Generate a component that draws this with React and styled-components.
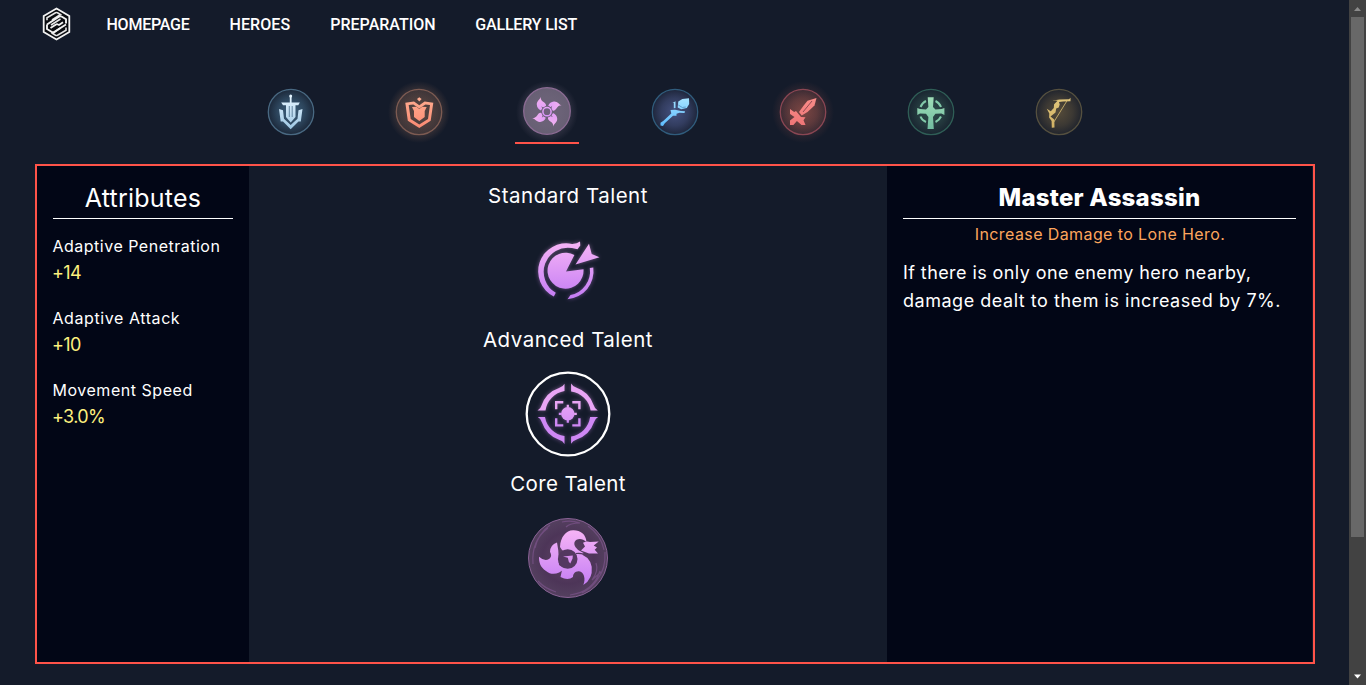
import React from "react";
import styled, { createGlobalStyle } from "styled-components";

const Global = createGlobalStyle`
  *, *::before, *::after { box-sizing: border-box; }
  body { margin: 0; background: #141b2a; overflow: hidden; }
  h2, h3, p, dl, dt, dd { margin: 0; font-weight: 400; }
`;

const Window = styled.div`
  display: flex;
  height: 685px;
  color: #fff;
  font-family: Inter, "Noto Sans", sans-serif;
`;
const Page = styled.div`
  flex: 1;
  display: flex;
  flex-direction: column;
`;
const Header = styled.header`
  display: flex;
  align-items: center;
  height: 48px;
  padding-left: 42px;
  gap: 35.5px;
`;
const Nav = styled.nav`
  display: flex;
  gap: 40px;
  padding-top: 2px;
`;
const NavLink = styled.a`
  width: ${(p) => p.$width}px;
  font: 500 16px/24px Roboto, sans-serif;
  letter-spacing: ${(p) => p.$track}px;
  white-space: nowrap;
`;
const RoleBar = styled.div`
  display: flex;
  justify-content: center;
  margin-top: 32px;
  height: 64px;
`;
const RoleSlot = styled.div`
  width: 128px;
  display: flex;
  justify-content: center;
`;
const RoleButton = styled.div`
  width: 64px;
  height: 64px;
  border-bottom: 2px solid ${(p) => (p.$active ? "#ff5349" : "transparent")};
  svg { display: block; overflow: visible; }
`;
const Board = styled.main`
  display: flex;
  height: 500px;
  margin: 20px 34px 0 35px;
  border: 2px solid #ff5349;
`;
const Column = styled.section`
  flex: 0 0 ${(p) => p.$width}px;
  padding: 16px;
  background: ${(p) => (p.$dark ? "#020616" : "transparent")};
`;
const Heading = styled.h2`
  height: 37px;
  border-bottom: 1px solid #fff;
  text-align: center;
  white-space: nowrap;
  font-size: ${(p) => p.$size || 24}px;
  font-weight: ${(p) => p.$weight || 400};
  line-height: 32px;
  letter-spacing: ${(p) => p.$track}px;
`;
const Stats = styled.dl`
  display: flex;
  flex-direction: column;
  gap: 20px;
  margin-top: 15px;
`;
const StatName = styled.dt`
  margin-left: -0.5px;
  font-size: 16px;
  line-height: 24px;
  letter-spacing: ${(p) => p.$track}px;
  white-space: nowrap;
`;
const StatValue = styled.dd`
  margin-left: -1px;
  padding-top: 1px;
  font-size: 18px;
  line-height: 27px;
  letter-spacing: -0.6px;
  color: #fdf07e;
`;
const Talent = styled.div`
  display: flex;
  flex-direction: column;
  align-items: center;
  height: 144px;
  svg { margin-top: 18px; overflow: visible; }
`;
const TalentTitle = styled.h3`
  font-size: 20.5px;
  line-height: 28px;
  letter-spacing: ${(p) => p.$track}px;
`;
const Summary = styled.p`
  margin-top: 3px;
  padding-left: 1px;
  text-align: center;
  font-size: 16px;
  line-height: 24px;
  letter-spacing: 0.4px;
  color: #fca55d;
`;
const Description = styled.p`
  margin-top: 13px;
  font-size: 18px;
  line-height: 28px;
  white-space: nowrap;
`;
const DescriptionLine = styled.span`
  display: block;
  letter-spacing: ${(p) => p.$track}px;
`;
const Scrollbar = styled.aside`
  width: 17px;
  display: flex;
  flex-direction: column;
  align-items: center;
  background: #424242;
`;
const Thumb = styled.div`
  width: 13px;
  height: 520px;
  background: #686868;
`;
const ScrollArrow = styled.svg`
  width: 17px;
  height: 17px;
  margin-top: ${(p) => (p.$end ? "auto" : 0)};
`;

const Logo = () => (
  <svg width="29" height="34" viewBox="0 0 29 34" fill="none">
    <path d="M14.5 1.5 27.3 9v16L14.5 32.500 1.700 25V9Z" fill="#0a0c10" stroke="#f2f2f2" strokeWidth="1.8" />
    <path d="M5 13.300V10.800L13.500 5.800q1-.5 2 0l3 1.700-8.500 5.500M24 20.500v2.700l-8.500 5q-1 .5-2 0l-3-1.700 8-5.500" stroke="#e4e4e4" strokeWidth="1.600" />
    <path d="M5 17.500 17 9.600q1.500-.8 3 .1l4 2.500v4.300M24 17.500l-11.500 7.300q-1.500.8-3 0L5 22v-4.500M8.500 21l5.500-3.500q1-.7 2 0l1 .5 4-2.700" stroke="#f2f2f2" strokeWidth="1.900" />
    <path d="m9 18 9.500-6" stroke="#e8e8e8" strokeWidth="1.500" />
  </svg>
);

const blades = [0, 90, 180, 270];

const roles = [
  {
    id: "tank", ring: "#496982", glow: "#4a7798", top: "#e4f4ff", bottom: "#9fc8e4", tint: 0.75,
    art: (
      <>
        <circle cx="31.7" cy="16" r="1.5" />
        <path d="M30.800 16h1.800v6.500h8.200l-1.500 2.700H36.500V37l-4.800 5.500L27 37V25.200H24l-1.800-2.700h8.600Z" />
        <path d="M20 29l4 1.200 1 8.500 6.700 6.300 6.800-6.300 1-8.500 4-1.200-1.700 12.500h-2.300L31.700 49.200 24 41.500h-2.300Z" />
        <path d="M30.300 26v11M33.200 26v11" stroke="#496e8b" strokeWidth=".8" />
      </>
    ),
  },
  {
    id: "fighter", ring: "#7d5b52", glow: "#8c6552", top: "#ffad91", bottom: "#fb8a72", tint: 0.42, halo: 0.28,
    art: (
      <>
        <path d="m32.300 17.300 2.300 1.700-2.300 2.500L30 19Z" />
        <path d="M18.300 22.700 27 21.500l5.300 3.700 5.300-3.700 8.700 1.200-2.600 18-11.400 7.200-11.500-7.200Zm3.400 2.300 2 14 8.600 5.600 8.700-5.600 2-14-4.600-.4-6.100 3.800-6-3.800Z" fillRule="evenodd" />
        <path d="M25 27l4.500-.3 2.800 2.200 2.900-2.200 4.500.3-2 4v6l-5.400 4-5.300-4v-6Z" />
      </>
    ),
  },
  {
    id: "assassin", ring: "#8b6b93", glow: "#6b6277", top: "#f3b2f0", bottom: "#c683ff", active: true, halo: 0.3,
    art: (
      <>
        {blades.map((a) => (
          <path key={a} transform={`rotate(${a} 32 31.7)`} d="M25.600 17C24.800 20 21.500 21 21.800 24.800 22 27.500 23.500 29.500 26 30.500L27.500 28 26 26.500 29 27.500 31 26C31.800 22 25.500 22.500 25.600 17Z" />
        ))}
        <circle cx="32" cy="31.700" r="5.600" fill="#70617d" />
        <circle cx="32" cy="31.700" r="4.100" fill="none" stroke="url(#ink-assassin)" strokeWidth="1.500" />
      </>
    ),
  },
  {
    id: "mage", ring: "#305c7c", glow: "#536198", top: "#a8e4ff", bottom: "#58baff", tint: 0.78,
    art: (
      <>
        <path d="m35.300 21.500 4-2.600 6.700-.7.200 5.800-2.400 4-5.600 1.200-3.500-1.700Z" />
        <path d="m29.500 23 3-1.700v6.600l-1.700.3v-5.200ZM27.500 30l4.500-.2 6 1.300 4 .1-.5 1.800-5-.2-3 1v2h-3.500l-8.200 7.500-1.800 2.800-2.500-.5v-2.800l3-2 7.800-7.200Z" />
        <path d="m35.300 25 4 2.500 3.500-.5" fill="none" stroke="#528fc0" strokeWidth=".8" />
      </>
    ),
  },
  {
    id: "warrior", ring: "#8a4653", glow: "#945049", top: "#f98d89", bottom: "#ed7375", tint: 0.78, halo: 0.18,
    art: (
      <>
        <path d="m45.500 18-2 7.500-7 6.500-5.800 3.600-2.700-3.600 4.500-6.300 4-5Z" />
        <path d="m32 32 9-11" stroke="#924952" strokeWidth="1" />
        <path d="m19 29 4.200 3 1.800-1 5 6 4.500.2-2 3L34.500 45h-4l-4.600-4-3.500 4H19v-4.500l4.500-3.500L19 34Z" />
      </>
    ),
  },
  {
    id: "support", ring: "#2f5e56", glow: "#487e6b", top: "#a0deb8", bottom: "#72bda0", tint: 0.5,
    art: (
      <>
        <path d="M28.700 17.300h6L34 27l2.500 2.500 6-.4 2.900-1v7l-3-1.500-6 .2L34 37l.8 12h-6.300l.9-12-2.400-3.200-6-.2-2.700 1.500v-7l2.700 1 6 .4 2.400-2.500Z" />
        <path d="M21.500 27q2-4.500 5.500-6M36.500 21q4 2 5.500 6M21.500 36.500q1.500 4 5.500 5.500M36.500 42q4-2 5.500-5.500" fill="none" stroke="#82c9a9" strokeWidth="2" />
      </>
    ),
  },
  {
    id: "marksman", ring: "#55503f", glow: "#7c6843", top: "#e2c77c", bottom: "#d0b063", tint: 0.62,
    art: (
      <>
        <path d="m24.500 20.700 8-1.200 9.500-.3 1.500-1.400v3.400l-7.500.2-4 .5.700 2.500-1 3-2.500 1-.7 4-5 4 3.800 3.200.2 7.900-2.700.2-.2-6.700-2.500-3.500.2-4-2.500-4.800 4 2.500 3-3.200.3-3.700 3.500-3.500-2.200-.4Z" />
        <path d="M40.300 20.300 26.500 42.500" stroke="#cbb16c" strokeWidth=".9" />
      </>
    ),
  },
];

const RoleIcon = ({ role }) => (
  <svg width="64" height="64" viewBox="0 0 64 64">
    <defs>
      <radialGradient id={`glow-${role.id}`}>
        <stop offset="0" stopColor={role.glow} stopOpacity={role.active ? 1 : role.tint} />
        <stop offset=".6" stopColor={role.glow} stopOpacity={role.active ? 1 : role.tint * 0.62} />
        <stop offset="1" stopColor={role.glow} stopOpacity={role.active ? 0.94 : role.tint * 0.2} />
      </radialGradient>
      <radialGradient id={`halo-${role.id}`}>
        <stop offset=".7" stopColor={role.glow} stopOpacity={role.halo} />
        <stop offset="1" stopColor={role.glow} stopOpacity="0" />
      </radialGradient>
      <linearGradient id={`ink-${role.id}`} gradientUnits="userSpaceOnUse" x1="0" y1="17" x2="0" y2="48">
        <stop stopColor={role.top} />
        <stop offset="1" stopColor={role.bottom} />
      </linearGradient>
    </defs>
    {role.halo && <circle cx="32" cy="32" r="31" fill={`url(#halo-${role.id})`} />}
    <circle cx="32" cy={role.active ? 31 : 32} r={role.active ? 23.300 : 22.700} fill={`url(#glow-${role.id})`} stroke={role.ring} strokeWidth="1.300" />
    <g fill={`url(#ink-${role.id})`}>{role.art}</g>
  </svg>
);

const TalentFrame = ({ children }) => (
  <svg width="84" height="84" viewBox="0 0 84 84">
    <defs>
      <linearGradient id="violet" gradientUnits="userSpaceOnUse" x1="0" y1="14" x2="0" y2="70">
        <stop stopColor="#f6b4f6" />
        <stop offset="1" stopColor="#c47df4" />
      </linearGradient>
      <radialGradient id="orb">
        <stop stopColor="#634669" />
        <stop offset=".65" stopColor="#4d3558" />
        <stop offset="1" stopColor="#54405f" />
      </radialGradient>
      <filter id="bloom" x="-20%" y="-20%" width="140%" height="140%">
        <feGaussianBlur stdDeviation="2" />
      </filter>
    </defs>
    {children}
  </svg>
);

const Glowing = ({ children }) => (
  <>
    <g fill="url(#violet)" filter="url(#bloom)" opacity=".45">{children}</g>
    <g fill="url(#violet)">{children}</g>
  </>
);

const StandardIcon = () => (
  <TalentFrame>
    <Glowing>
      <path d="M40 43.500 48.400 27A18 18 0 1 0 57.500 41.300Z" />
      <path d="M63 15.700 65.700 26 73.500 29.300 49.500 36.500Z" />
      <path d="M54 13.500 54.300 17.500 51.500 21.300 46 20A24.200 24.200 0 0 0 29.800 64.800L27.800 68.400A28 28 0 0 1 46 15.900Q51 16 54 13.500Z" />
      <path d="M63.800 39.900 67.300 39.500A28 28 0 0 1 41.500 71.200L44.500 67A24 24 0 0 0 63.800 39.900Z" />
    </Glowing>
  </TalentFrame>
);

const quadrantTints = ["#e9a5f5", "#e9a5f5", "#cf88f5", "#cf88f5"];

const AdvancedIcon = () => (
  <TalentFrame>
    <circle cx="42" cy="42" r="41.300" fill="none" stroke="#fff" strokeWidth="2.300" />
    <Glowing>
      {blades.map((a, i) => (
        <g key={a} transform={`rotate(${a} 41.8 41.8)`} fill={quadrantTints[i]}>
          <path d="M38.500 11.800V19A23 23 0 0 0 19.500 38.500H11.500Q14.800 36.500 15.500 33.500A28 28 0 0 1 33 16Q37 14.800 38.500 11.800Z" />
          <path d="M29 29h8.300v2.400h-5.900v5.900H29ZM40.700 35.500v-2.700h2.200v2.700Z" />
        </g>
      ))}
      <circle cx="41.800" cy="41.800" r="6.700" />
    </Glowing>
  </TalentFrame>
);

const CoreIcon = () => (
  <TalentFrame>
    <circle cx="42" cy="42" r="39.500" fill="url(#orb)" stroke="#8a6295" />
    <g fill="none" stroke="#704d7e" strokeWidth="1.200">
      <path d="M7 48Q5 25 22 12M36 6q9-2 18 1-10 0-14 4M24 9Q12 18 9 32M74 55Q67 76 44 79M30 76Q18 72 12 65M79 36q1 17-8 28-5 8-15 13M62 10q13 9 16 24M70 47q3 8-4 17l9-8" />
    </g>
    <g fill="url(#violet)">
      <path d="M34 31C34.500 21 40 14.500 47 14.300 54 14 60 18 60.500 26 56 21.500 50 22.500 48.600 26c-1 3 1 5.500 3.500 8l5.500 3-5 7L36 34Z" />
      <path d="M57 26.800q4-2 7-.8l8.700-.5-5 4 3.300 2-2.300 2.200 3.300 3.800H63l-8-3 4-4Z" />
      <path d="M13 40.700q5.500 5 10 2.300c3-2.200 2.300-4.700 1-7Q24 29 31 26.500l1.300 8L33 49l5.500 3.500C33 58 26 60 20 55 14 51 13 46 13 40.700Z" />
      <path d="M51 35.500Z M50 36Q64 40 65.700 50.700 67 63 57.300 69C60 63 58 56 53 55.300 49 55 47 58 47 61q-5 4-12.500 0l2-9Z" />
    </g>
    <path d="M50 37.500q6-1 14 3" fill="none" stroke="#543860" strokeWidth="1.200" />
    <circle cx="41.700" cy="43" r="9.800" fill="#543860" />
    <path d="m37 40.500 9.800-1-.2 3-2.300 5-1.500-1.800-1-4Z" fill="#d88fef" />
  </TalentFrame>
);

const links = [
  { text: "HOMEPAGE", width: 83, track: -0.24 },
  { text: "HEROES", width: 60.8, track: 0.08 },
  { text: "PREPARATION", width: 105, track: 0 },
  { text: "GALLERY LIST", width: 102, track: -0.18 },
];
const stats = [
  { name: "Adaptive Penetration", value: "+14", track: 0.5 },
  { name: "Adaptive Attack", value: "+10", track: 0.58 },
  { name: "Movement Speed", value: "+3.0%", track: 0.53 },
];
const talents = [
  { title: "Standard Talent", Icon: StandardIcon, track: 0.5 },
  { title: "Advanced Talent", Icon: AdvancedIcon, track: 0.48 },
  { title: "Core Talent", Icon: CoreIcon, track: 0.4 },
];

export default function App() {
  return (
    <Window>
      <Global />
      <Page>
        <Header>
          <Logo />
          <Nav>
            {links.map((l) => (
              <NavLink key={l.text} $width={l.width} $track={l.track}>{l.text}</NavLink>
            ))}
          </Nav>
        </Header>
        <RoleBar>
          {roles.map((role) => (
            <RoleSlot key={role.id}>
              <RoleButton $active={role.active}><RoleIcon role={role} /></RoleButton>
            </RoleSlot>
          ))}
        </RoleBar>
        <Board>
          <Column $width={212} $dark>
            <Heading $size={25} $track={0.25}>Attributes</Heading>
            <Stats>
              {stats.map((s) => (
                <div key={s.name}>
                  <StatName $track={s.track}>{s.name}</StatName>
                  <StatValue>{s.value}</StatValue>
                </div>
              ))}
            </Stats>
          </Column>
          <Column $width={638}>
            {talents.map(({ title, Icon, track }) => (
              <Talent key={title}>
                <TalentTitle $track={track}>{title}</TalentTitle>
                <Icon />
              </Talent>
            ))}
          </Column>
          <Column $width={425} $dark>
            <Heading $weight={800} $track={0.22}>Master Assassin</Heading>
            <Summary>Increase Damage to Lone Hero.</Summary>
            <Description>
              <DescriptionLine $track={0.42}>If there is only one enemy hero nearby,</DescriptionLine>
              <DescriptionLine $track={0.53}>damage dealt to them is increased by 7%.</DescriptionLine>
            </Description>
          </Column>
        </Board>
      </Page>
      <Scrollbar>
        <ScrollArrow viewBox="0 0 17 17"><path d="M5 11 8.500 7 12 11Z" fill="#8b8b8b" /></ScrollArrow>
        <Thumb />
        <ScrollArrow $end viewBox="0 0 17 17"><path d="M5 6.500 8.500 10.500 12 6.500Z" fill="#fff" /></ScrollArrow>
      </Scrollbar>
    </Window>
  );
}
